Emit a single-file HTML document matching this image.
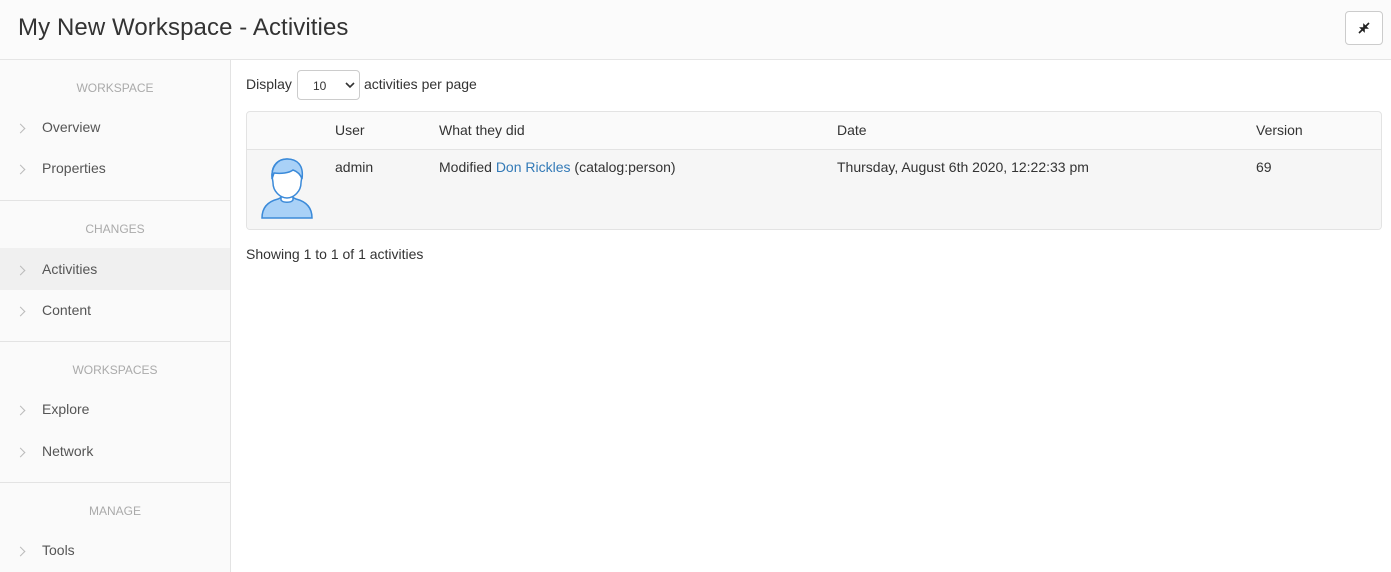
<!DOCTYPE html><html><head><style>
*{box-sizing:border-box;margin:0;padding:0}
body{width:1391px;height:572px;overflow:hidden;background:#fff;font-family:"Liberation Sans",sans-serif;color:#333;position:relative}
.a{position:absolute;white-space:nowrap}
.hdr{left:0;top:0;width:1391px;height:60px;background:#fbfbfb;border-bottom:1px solid #e5e5e5}
.side{left:0;top:60px;width:231px;height:512px;background:#fafafa;border-right:1px solid #e3e3e3}
.lbl{font-size:12px;color:#aaa;width:230px;text-align:center}
.it{font-size:14px;color:#555;left:42px}
.chev{left:17px;width:7px;height:7px;border-top:1px solid #bbb;border-right:1px solid #bbb;transform:rotate(45deg)}
.hr{left:0;width:230px;height:1px;background:#e3e3e3}
.t{font-size:14px;color:#333}
</style></head><body>
<div class="a hdr"></div>
<div class="a" style="left:18px;top:14px;font-size:24px;letter-spacing:0.1px;color:#333">My New Workspace - Activities</div>
<div class="a" style="left:1345px;top:11px;width:38px;height:34px;border:1px solid #ccc;border-radius:4px;background:#fff"></div>
<svg class="a" style="left:1357px;top:21px" width="14" height="14" viewBox="0 0 14 14"><path d="M2 12L6 8M12 2L8 6M4 7h3v3zM10 7H7V4z" stroke="#222" stroke-width="1.6" fill="#222"/></svg>
<div class="a side"></div>
<div class="a lbl" style="top:81px">WORKSPACE</div>
<div class="a chev" style="top:125px"></div><div class="a it" style="top:119px">Overview</div>
<div class="a chev" style="top:166px"></div><div class="a it" style="top:160px">Properties</div>
<div class="a hr" style="top:200px"></div>
<div class="a lbl" style="top:222px">CHANGES</div>
<div class="a" style="left:0;top:248px;width:230px;height:42px;background:#f0f0f0"></div>
<div class="a chev" style="top:267px"></div><div class="a it" style="top:261px">Activities</div>
<div class="a chev" style="top:308px"></div><div class="a it" style="top:302px">Content</div>
<div class="a hr" style="top:341px"></div>
<div class="a lbl" style="top:363px">WORKSPACES</div>
<div class="a chev" style="top:407px"></div><div class="a it" style="top:401px">Explore</div>
<div class="a chev" style="top:449px"></div><div class="a it" style="top:443px">Network</div>
<div class="a hr" style="top:482px"></div>
<div class="a lbl" style="top:504px">MANAGE</div>
<div class="a chev" style="top:548px"></div><div class="a it" style="top:542px">Tools</div>

<div class="a t" style="left:246px;top:76px">Display</div>
<div class="a" style="left:297px;top:70px;width:63px;height:30px;border:1px solid #ccc;border-radius:4px;background:#fff;font-size:12px;padding:8px 0 0 15px">10</div>
<svg class="a" style="left:345px;top:81px" width="10" height="8"><path d="M1 2l4 4 4-4" stroke="#333" stroke-width="1.6" fill="none"/></svg>
<div class="a t" style="left:364px;top:76px">activities per page</div>

<div class="a" style="left:246px;top:111px;width:1136px;height:119px;border:1px solid #e3e3e3;border-radius:4px;background:#fafafa;overflow:hidden">
<div style="position:absolute;left:0;top:37px;width:100%;height:1px;background:#e3e3e3"></div>
<div style="position:absolute;left:0;top:38px;width:100%;height:80px;background:#f6f6f6"></div>
</div>
<div class="a t" style="left:335px;top:122px">User</div>
<div class="a t" style="left:439px;top:122px">What they did</div>
<div class="a t" style="left:837px;top:122px">Date</div>
<div class="a t" style="left:1256px;top:122px">Version</div>
<svg class="a" style="left:260px;top:157px" width="54" height="62" viewBox="0 0 54 62"><path d="M2 61c0-12 8-17 16-19l4-2h10l4 2c8 2 16 7 16 19z" fill="#a9d1f7" stroke="#3b8ad9" stroke-width="1.5"/><path d="M21 36v7c2 3 10 3 12 0v-7z" fill="#fff" stroke="#3b8ad9" stroke-width="1.5"/><path d="M12 18c0-11 7-16 15-16s15 5 15 16c0 3-1 6-1 8 0 8-7 15-14 15s-14-7-14-15c0-2-1-5-1-8z" fill="#fff" stroke="#3b8ad9" stroke-width="1.5"/><path d="M12 22c-1-12 5-20 15-20s17 6 15 20c-2-6-6-8-9-9-4 3-12 4-19 3z" fill="#a9d1f7" stroke="#3b8ad9" stroke-width="1.5"/></svg>
<div class="a t" style="left:335px;top:159px">admin</div>
<div class="a t" style="left:439px;top:159px">Modified <span style="color:#337ab7">Don Rickles</span> (catalog:person)</div>
<div class="a t" style="left:837px;top:159px">Thursday, August 6th 2020, 12:22:33 pm</div>
<div class="a t" style="left:1256px;top:159px">69</div>
<div class="a t" style="left:246px;top:246px">Showing 1 to 1 of 1 activities</div>
</body></html>
